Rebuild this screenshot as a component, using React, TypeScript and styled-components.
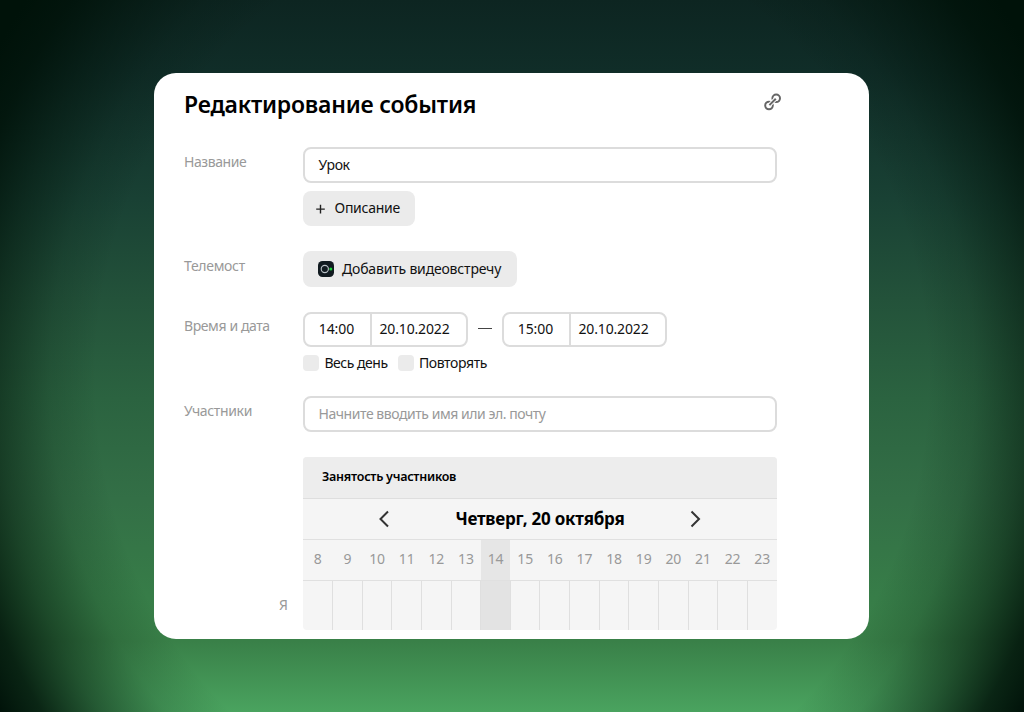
import React from "react";
import styled, { createGlobalStyle } from "styled-components";

const Global = createGlobalStyle`
  * { box-sizing: border-box; }
  body { margin: 0; }
  button, input { font: inherit; color: inherit; letter-spacing: inherit; }
`;

const Page = styled.main`
  height: 712px;
  padding: 72.5px 155px 0 154.4px;
  font-family: "Noto Sans", "Open Sans", sans-serif;
  font-size: 14px;
  line-height: 20px;
  color: #111;
  background:
    radial-gradient(ellipse 520px 565px at 512px 378px, rgba(0, 18, 9, 0) 80%, rgba(0, 18, 9, 0.16) 89%, rgba(0, 18, 9, 0.5) 99%, rgba(0, 18, 9, 0.86) 108%, rgba(0, 18, 9, 1) 115%),
    linear-gradient(#0d2521 0%, #102d28 10%, #194134 28%, #23523a 42%, #2b6340 56%, #336f46 70%, #377d48 84%, #398048 90%, #4aa35f 100%);
`;

const Card = styled.section`
  height: 566px;
  border-radius: 22px;
  background: #fff;
  padding: 16.5px 92px 0 29.6px;
  overflow: hidden;
`;

const Header = styled.header`
  display: flex;
  justify-content: space-between;
  width: 598px;
  height: 58px;
`;

const Title = styled.h1`
  margin: 0;
  font-size: 23px;
  line-height: 30px;
  font-weight: 600;
  color: #000;
  white-space: nowrap;
`;

const LinkIcon = styled.svg`
  width: 20px;
  height: 20px;
  margin-top: 3px;
`;

const Row = styled.div<{ $height: number }>`
  display: grid;
  grid-template-columns: 119px 474px;
  height: ${(p) => p.$height}px;
`;

const Label = styled.div<{ $top?: number }>`
  padding-top: ${(p) => p.$top ?? 5}px;
  color: #999;
  white-space: nowrap;
`;

const Text = styled.span<{ $spacing?: number }>`
  letter-spacing: ${(p) => p.$spacing ?? 0}px;
  white-space: nowrap;
`;

const Field = styled.div<{ $muted?: boolean }>`
  display: flex;
  align-items: center;
  height: 36px;
  padding: 0 13.5px 1px;
  border: 2px solid #dcdcdc;
  border-radius: 8px;
  color: ${(p) => (p.$muted ? "#999" : "#111")};
`;

const Button = styled.button<{ $width: number; $height: number; $gap: number }>`
  display: flex;
  align-items: center;
  gap: ${(p) => p.$gap}px;
  width: ${(p) => p.$width}px;
  height: ${(p) => p.$height}px;
  padding: 0 12px 1px;
  border: 0;
  border-radius: 8px;
  background: #ebebeb;
`;

const Stack = styled.div`
  display: flex;
  flex-direction: column;
  gap: 8px;
`;

const Times = styled.div`
  display: flex;
  align-items: center;
`;

const TimeGroup = styled.div`
  display: flex;
  width: 165.5px;
  height: 35px;
  border: 2px solid #dcdcdc;
  border-radius: 8px;
`;

const Time = styled.div`
  display: flex;
  align-items: center;
  width: 67px;
  padding: 0 0 2px 13.8px;
  border-right: 2px solid #dcdcdc;
`;

const DateCell = styled.div`
  display: flex;
  align-items: center;
  padding: 0 0 2px 7.5px;
`;

const Dash = styled.span`
  width: 14px;
  height: 1px;
  margin: -3px 9.5px 0 10px;
  background: #444;
`;

const Checks = styled.div`
  display: flex;
  gap: 10px;
`;

const Check = styled.label`
  display: flex;
  align-items: center;
  gap: 5.4px;
  height: 16px;
`;

const Box = styled.span`
  width: 16px;
  height: 16px;
  border-radius: 4px;
  background: #ebebeb;
`;

const Schedule = styled.div`
  display: grid;
  grid-template-columns: 119px 474px;
`;

const Me = styled.div`
  padding: 138px 15px 0 0;
  text-align: right;
  color: #999;
`;

const Grid = styled.div`
  height: 173px;
  border-radius: 4px;
  overflow: hidden;
  background: #f5f5f5;
`;

const Bar = styled.div`
  height: 42px;
  padding: 10px 19px 0;
  background: #ededed;
  border-bottom: 1px solid #dedede;
  color: #000;
  font-weight: 600;
  font-size: 12.5px;
`;

const Nav = styled.div`
  display: flex;
  align-items: center;
  justify-content: space-between;
  height: 41px;
  padding: 0 74px 1px;
  border-bottom: 1px solid #e0e0e0;
  color: #000;
  font-size: 17px;
  font-weight: 700;
`;

const Arrow = styled.svg`
  width: 14px;
  height: 20px;
`;

const Hours = styled.div`
  display: grid;
  grid-template-columns: repeat(16, 1fr);
  height: 41px;
  border-bottom: 1px solid #e0e0e0;
`;

const Hour = styled.div<{ $active: boolean }>`
  display: flex;
  align-items: center;
  justify-content: center;
  padding-bottom: 2px;
  letter-spacing: -0.1px;
  color: #999;
  background: ${(p) => (p.$active ? "#e6e6e6" : "transparent")};
`;

const Slots = styled(Hours)`
  height: 50px;
  border: 0;
`;

const Slot = styled.div<{ $active: boolean }>`
  margin-left: -0.5px;
  border-left: 1px solid #dfdfdf;
  background: ${(p) => (p.$active ? "#e3e3e3" : "transparent")};
  &:first-child { border: 0; }
`;

const hours = Array.from({ length: 16 }, (_, i) => i + 8);

function TimeField({ time, date }: { time: string; date: string }) {
  return (
    <TimeGroup>
      <Time><Text $spacing={-0.1}>{time}</Text></Time>
      <DateCell><Text $spacing={-0.15}>{date}</Text></DateCell>
    </TimeGroup>
  );
}

export default function App() {
  return (
    <Page>
      <Global />
      <Card>
        <Header>
          <Title><Text $spacing={-0.22}>Редактирование события</Text></Title>
          <LinkIcon viewBox="0 0 20 20" fill="none" stroke="#666" strokeWidth="2">
            <circle cx="7" cy="13.5" r="3.8" />
            <circle cx="14.2" cy="6.3" r="3.8" />
            <path d="M7.6 12.9 13.6 6.9" stroke="#fff" strokeWidth="4" />
            <path d="M7.4 13.1 13.8 6.7" />
          </LinkIcon>
        </Header>
        <Row $height={104}>
          <Label><Text $spacing={-0.42}>Название</Text></Label>
          <Stack>
            <Field><Text $spacing={-0.4}>Урок</Text></Field>
            <Button $width={112} $height={35} $gap={7.5}>
              <svg width="12" height="12" viewBox="0 0 12 12" stroke="#222" strokeWidth="1.4"><path d="M1.2 7.1H9.8M5.5 2.8V11.4" /></svg>
              <Text $spacing={-0.25}>Описание</Text>
            </Button>
          </Stack>
        </Row>
        <Row $height={61}>
          <Label><Text $spacing={-0.3}>Телемост</Text></Label>
          <Button $width={214} $height={36} $gap={7}>
            <svg width="20" height="18" viewBox="-2 0 20 18"><rect x="1" y="1" width="16" height="16" rx="4.5" fill="#111a20" /><circle cx="7.8" cy="9" r="3.6" fill="none" stroke="#b9c0c6" strokeWidth="1.1" /><circle cx="13.8" cy="9" r="1.5" fill="#1fd13c" /></svg>
            <Text $spacing={-0.18}>Добавить видеовстречу</Text>
          </Button>
        </Row>
        <Row $height={84}>
          <Label $top={4}><Text $spacing={-0.4}>Время и дата</Text></Label>
          <Stack>
            <Times>
              <TimeField time="14:00" date="20.10.2022" />
              <Dash />
              <TimeField time="15:00" date="20.10.2022" />
            </Times>
            <Checks>
              <Check><Box /><Text $spacing={-0.47}>Весь день</Text></Check>
              <Check><Box /><Text $spacing={-0.4}>Повторять</Text></Check>
            </Checks>
          </Stack>
        </Row>
        <Row $height={61}>
          <Label><Text $spacing={-0.35}>Участники</Text></Label>
          <Field $muted><Text $spacing={-0.45}>Начните вводить имя или эл. почту</Text></Field>
        </Row>
        <Schedule>
          <Me>Я</Me>
          <Grid>
            <Bar><Text $spacing={-0.25}>Занятость участников</Text></Bar>
            <Nav>
              <Arrow viewBox="0 0 14 20" fill="none" stroke="#333" strokeWidth="2"><path d="m11 2.5-7.5 7.5 7.5 7.5" /></Arrow>
              <Text $spacing={-0.22}>Четверг, 20 октября</Text>
              <Arrow viewBox="0 0 14 20" fill="none" stroke="#333" strokeWidth="2"><path d="m2.5 2.5 7.5 7.5-7.5 7.5" /></Arrow>
            </Nav>
            <Hours>{hours.map((h) => <Hour key={h} $active={h === 14}>{h}</Hour>)}</Hours>
            <Slots>{hours.map((h) => <Slot key={h} $active={h === 14} />)}</Slots>
          </Grid>
        </Schedule>
      </Card>
    </Page>
  );
}
